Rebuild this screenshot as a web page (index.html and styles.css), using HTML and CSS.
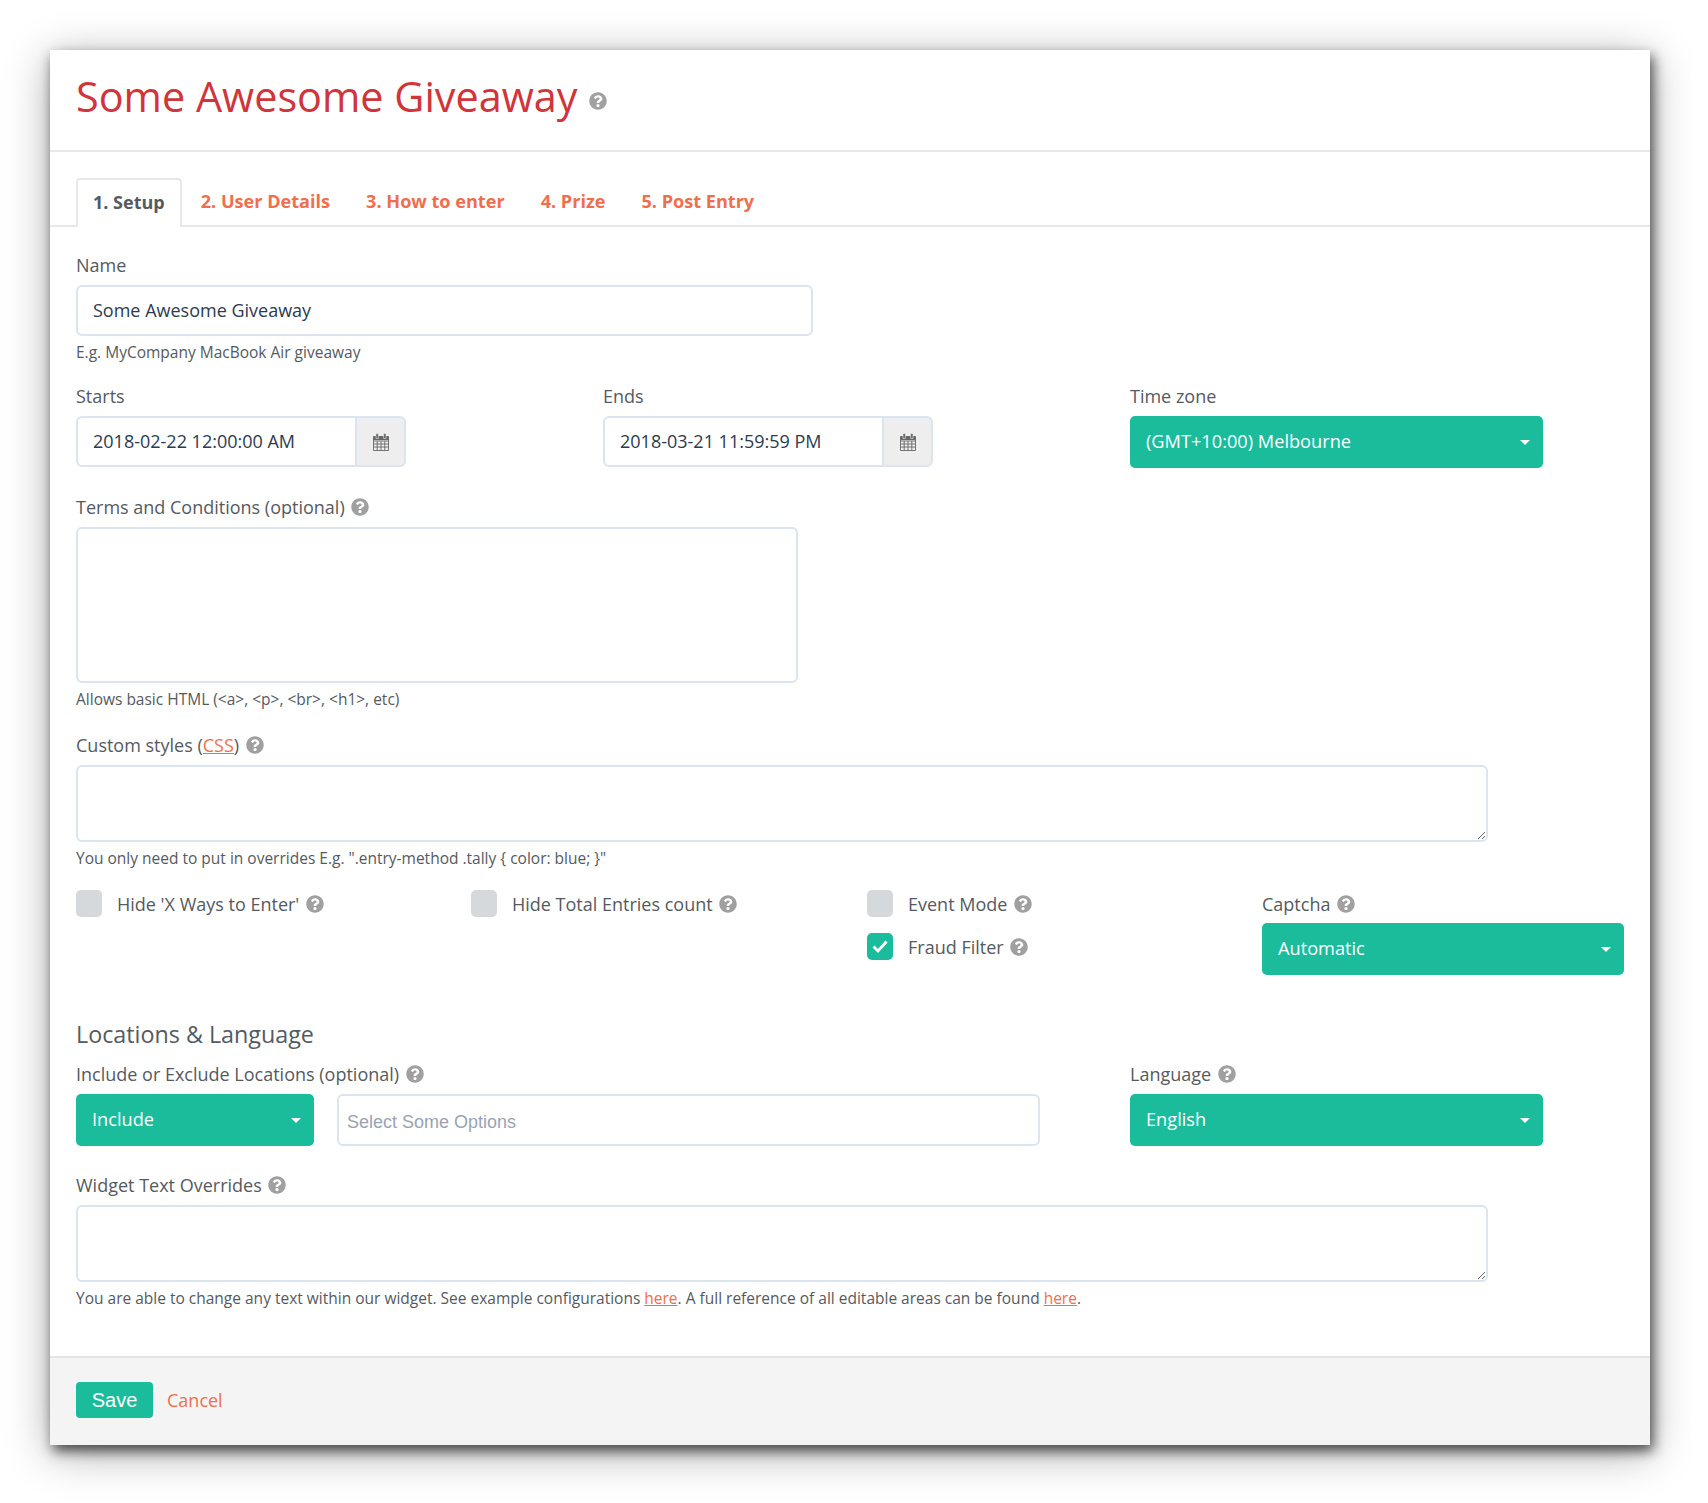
FILE: index.html
```html
<!DOCTYPE html>
<html lang="en">

<head>
    <meta charset="UTF-8">
    <title>Some Awesome Giveaway</title>
    <link rel="stylesheet" href="styles.css">
</head>

<body>
    <svg class="icon-defs" width="0" height="0">
        <symbol id="q" viewBox="0 0 512 512">
            <path d="M504 256c0 136.997-111.043 248-248 248S8 392.997 8 256C8 119.083 119.043 8 256 8s248 111.083 248 248zM262.655 90c-54.497 0-89.255 22.957-116.549 63.758-3.536 5.286-2.353 12.415 2.715 16.258l34.699 26.31c5.205 3.947 12.621 3.008 16.665-2.122 17.864-22.658 30.113-35.797 57.303-35.797 20.429 0 45.698 13.148 45.698 32.958 0 14.976-12.363 22.667-32.534 33.976C247.128 238.528 216 254.941 216 296v4c0 6.627 5.373 12 12 12h56c6.627 0 12-5.373 12-12v-1.333c0-28.462 83.186-29.647 83.186-106.667 0-58.002-60.165-102-116.531-102zM256 338c-25.365 0-46 20.635-46 46 0 25.364 20.635 46 46 46s46-20.636 46-46c0-25.365-20.635-46-46-46z"/>
        </symbol>
        <symbol id="cal" viewBox="0 0 18 18">
            <path d="M1.5 3.5h15v14h-15z M1.5 8h15 M1.5 11h15 M1.5 14h15 M5.2 8v9.5 M9 8v9.5 M12.8 8v9.5" fill="none" stroke="currentColor" stroke-width=".9"/>
            <path d="M1.5 3.5h15V7h-15z" fill="currentColor"/>
            <path d="M4 .5h2.4v5H4z M11.6 .5H14v5h-2.4z" fill="currentColor" stroke="#eee" stroke-width=".6"/>
        </symbol>
    </svg>

    <div class="card">
        <div class="card-header">
            <h1>Some Awesome Giveaway <svg class="help help-lg"><use href="#q"/></svg></h1>
        </div>

        <ul class="tabs">
            <li class="tab active">1. Setup</li>
            <li class="tab">2. User Details</li>
            <li class="tab">3. How to enter</li>
            <li class="tab">4. Prize</li>
            <li class="tab">5. Post Entry</li>
        </ul>

        <form class="form">
            <div class="field name-field">
                <label>Name</label>
                <input class="input" type="text" value="Some Awesome Giveaway">
                <p class="hint">E.g. MyCompany MacBook Air giveaway</p>
            </div>

            <div class="row-dates">
                <div>
                    <label>Starts</label>
                    <div class="date-group">
                        <input class="input" type="text" value="2018-02-22 12:00:00 AM">
                        <span class="addon"><svg><use href="#cal"/></svg></span>
                    </div>
                </div>
                <div>
                    <label>Ends</label>
                    <div class="date-group">
                        <input class="input" type="text" value="2018-03-21 11:59:59 PM">
                        <span class="addon"><svg><use href="#cal"/></svg></span>
                    </div>
                </div>
                <div>
                    <label>Time zone</label>
                    <button type="button" class="dropdown">(GMT+10:00) Melbourne<span class="caret"></span></button>
                </div>
            </div>

            <div class="field terms-field">
                <label>Terms and Conditions (optional) <svg class="help"><use href="#q"/></svg></label>
                <textarea class="input terms"></textarea>
                <p class="hint">Allows basic HTML (&lt;a&gt;, &lt;p&gt;, &lt;br&gt;, &lt;h1&gt;, etc)</p>
            </div>

            <div class="field">
                <label>Custom styles (<a href="#">CSS</a>) <svg class="help"><use href="#q"/></svg></label>
                <textarea class="input wide"></textarea>
                <p class="hint">You only need to put in overrides E.g. ".entry-method .tally { color: blue; }"</p>
            </div>

            <div class="row-options">
                <div class="check"><span class="box"></span>Hide 'X Ways to Enter' <svg class="help"><use href="#q"/></svg></div>
                <div class="check"><span class="box"></span>Hide Total Entries count <svg class="help"><use href="#q"/></svg></div>
                <div class="check-stack">
                    <div class="check"><span class="box"></span>Event Mode <svg class="help"><use href="#q"/></svg></div>
                    <div class="check"><span class="box on"><svg viewBox="0 0 26 26"><path d="M6.5 13.5l4.5 4.5 8.5-9.5" fill="none" stroke="#fff" stroke-width="2.8"/></svg></span>Fraud Filter <svg class="help"><use href="#q"/></svg></div>
                </div>
                <div class="captcha">
                    <label>Captcha <svg class="help"><use href="#q"/></svg></label>
                    <button type="button" class="dropdown">Automatic<span class="caret"></span></button>
                </div>
            </div>

            <h3>Locations &amp; Language</h3>

            <div class="row-locations">
                <div>
                    <label>Include or Exclude Locations (optional) <svg class="help"><use href="#q"/></svg></label>
                    <div class="location-inputs">
                        <button type="button" class="dropdown">Include<span class="caret"></span></button>
                        <input class="input multi" type="text" placeholder="Select Some Options">
                    </div>
                </div>
                <div>
                    <label>Language <svg class="help"><use href="#q"/></svg></label>
                    <button type="button" class="dropdown">English<span class="caret"></span></button>
                </div>
            </div>

            <div class="field">
                <label>Widget Text Overrides <svg class="help"><use href="#q"/></svg></label>
                <textarea class="input wide"></textarea>
                <p class="hint">You are able to change any text within our widget. See example configurations <a href="#">here</a>. A full reference of all editable areas can be found <a href="#">here</a>.</p>
            </div>
        </form>

        <div class="card-footer">
            <button type="button" class="save">Save</button>
            <a class="cancel" href="#">Cancel</a>
        </div>
    </div>
</body>
</html>
```

FILE: styles.css
```css
* {
    box-sizing: border-box;
}

body {
    margin: 0;
    padding: 50px 58px 58px 50px;
    background-color: #fff;
    color: #555a60;
    font-family: "Open Sans", sans-serif;
    font-size: 18px;
}

.icon-defs {
    position: absolute;
}

.card {
    display: flex;
    flex-direction: column;
    width: 1600px;
    height: 1395px;
    background-color: #fff;
    box-shadow: 3px 6px 12px rgba(0, 0, 0, 0.65), 0 8px 42px rgba(0, 0, 0, 0.32);
}

.card-header {
    height: 102px;
    padding: 0 26px;
    border-bottom: 2px solid #e6e8eb;
}

h1 {
    margin: 0;
    padding-top: 16px;
    color: #d1343a;
    font-size: 41.4px;
    font-weight: 400;
    line-height: 60px;
}

.help {
    width: 18px;
    height: 18px;
    margin-left: 2px;
    fill: #a0a0a0;
    vertical-align: -2px;
}

.help-lg {
    margin-left: 1px;
    vertical-align: 2px;
}

.tabs {
    display: flex;
    margin: 0;
    padding: 26px 26px 0;
    list-style: none;
    border-bottom: 2px solid #e6e8eb;
}

.tab {
    height: 47px;
    padding: 0 18px;
    color: #ef6f4d;
    font-size: 18.1px;
    font-weight: 700;
    line-height: 46px;
}

.tab.active {
    height: 49px;
    margin-right: 1px;
    margin-bottom: -2px;
    padding: 0 15px;
    background-color: #fff;
    color: #555a60;
    border: 2px solid #e6e8eb;
    border-bottom: 0;
    border-radius: 4px 4px 0 0;
    font-size: 18px;
    line-height: 44px;
}

.form {
    flex: 1;
    padding: 26px 26px 0;
}

label {
    display: block;
    margin-bottom: 8px;
    line-height: 24px;
}

a {
    color: #ef6f4d;
}

.input {
    display: block;
    width: 100%;
    height: 51px;
    padding: 0 15px 1px;
    background-color: #fff;
    color: #2c3b4f;
    border: 2px solid #dbe4ef;
    border-radius: 6px;
    outline: none;
    font-family: "Open Sans", sans-serif;
    font-size: 18px;
}

.hint {
    margin: 5px 0 0;
    color: #555a60;
    font-size: 15.5px;
    line-height: 22px;
}

.field {
    margin-bottom: 22px;
}

.name-field {
    width: 737px;
    margin-bottom: 21px;
}

.terms-field {
    margin-bottom: 23px;
}

.row-dates {
    display: grid;
    grid-template-columns: 527px 527px 413px;
    margin-bottom: 27px;
}

.date-group {
    display: flex;
    width: 330px;
    margin-top: 1px;
}

.date-group .input {
    flex: 1;
    min-width: 0;
    border-radius: 6px 0 0 6px;
}

.addon {
    display: flex;
    justify-content: center;
    align-items: center;
    width: 51px;
    height: 51px;
    margin-left: -2px;
    background-color: #eee;
    color: #666;
    border: 2px solid #dbe4ef;
    border-radius: 0 6px 6px 0;
}

.addon svg {
    width: 18px;
    height: 18px;
}

.dropdown {
    position: relative;
    display: block;
    width: 100%;
    height: 52px;
    padding: 0 16px 3px;
    background-color: #1abc9c;
    color: #fff;
    border: 0;
    border-radius: 5px;
    font-family: "Open Sans", sans-serif;
    font-size: 18.2px;
    font-weight: 400;
    text-align: left;
}

.caret {
    position: absolute;
    top: 24px;
    right: 13px;
    border-top: 5px solid #fff;
    border-left: 5px solid transparent;
    border-right: 5px solid transparent;
}

.terms {
    width: 722px;
    height: 156px;
    resize: none;
}

.wide {
    width: 1412px;
    height: 77px;
    resize: both;
}

.row-options {
    display: grid;
    grid-template-columns: 395px 396px 395px 362px;
    height: 82px;
    margin-top: -1px;
}

.check {
    display: flex;
    align-items: center;
    height: 27px;
    white-space: pre;
}

.check .help {
    margin-left: 2px;
}

.box {
    width: 26px;
    height: 27px;
    margin-right: 15px;
    background-color: #d5d9dc;
    border-radius: 5px;
}

.box.on {
    background-color: #1abc9c;
}

.box svg {
    display: block;
}

.check-stack {
    display: flex;
    flex-direction: column;
    gap: 16px;
}

.captcha label {
    margin-top: 2px;
    margin-bottom: 7px;
}

h3 {
    margin: 45px 0 11px;
    color: #555a60;
    font-size: 23.3px;
    font-weight: 400;
    line-height: 34px;
}

.row-locations {
    display: grid;
    grid-template-columns: 1054px 413px;
    margin-bottom: 27px;
}

.location-inputs {
    display: flex;
    gap: 23px;
}

.location-inputs .dropdown {
    flex: none;
    width: 238px;
}

.multi {
    width: 703px;
    height: 52px;
    padding: 4px 8px 0;
    font-family: "Liberation Sans", sans-serif;
    font-size: 18px;
}

.multi::placeholder {
    color: #98a4b3;
}

.card-footer {
    display: flex;
    align-items: center;
    height: 89px;
    padding: 0 26px 4px;
    background-color: #f4f4f4;
    border-top: 2px solid #e4e5e7;
}

.save {
    width: 77px;
    height: 36px;
    padding: 2px 0 0;
    background-color: #1abc9c;
    color: #fff;
    border: 0;
    border-radius: 4px;
    font-family: "Liberation Sans", sans-serif;
    font-size: 20px;
}

.cancel {
    margin-left: 14px;
    font-size: 18px;
    text-decoration: none;
}
```
